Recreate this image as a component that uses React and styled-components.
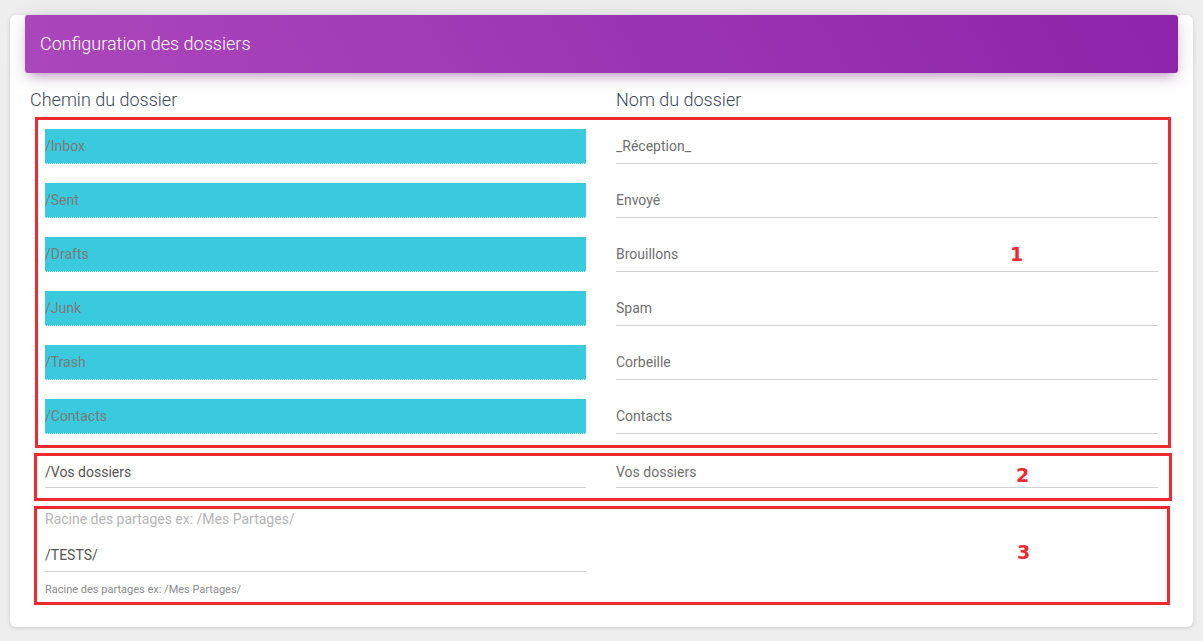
import React from 'react'
import styled, {createGlobalStyle} from 'styled-components'

const GlobalStyle = createGlobalStyle`
  html, body {
    margin: 0;
    padding: 0;
    background: #eeeeee;
    font-family: Roboto, "Liberation Sans", sans-serif;
  }
`

const Page = styled.div`
  padding: 35px 10px 15px 10px;
`
const Card = styled.div`
  width: 1183px;
  background: #fff;
  border-radius: 6px;
  box-shadow: 0 1px 4px 0 rgba(0, 0, 0, 0.14);
  padding-bottom: 22px;
`
const CardHeader = styled.div`
  margin: -20px 15px 0 15px;
  height: 58px;
  padding: 0 15px;
  display: flex;
  align-items: center;
  border-radius: 3px;
  background: linear-gradient(60deg, #ab47bc, #8e24aa);
  box-shadow: 0 4px 20px 0 rgba(0, 0, 0, 0.14), 0 7px 10px -5px rgba(156, 39, 176, 0.4);
`
const Title = styled.h4`
  margin: 0;
  color: #fff;
  font-size: 18px;
  font-weight: 300;
  line-height: 24px;
`
const Labels = styled.div`
  display: grid;
  grid-template-columns: 586px 1fr;
  margin: 15px 0 5px 20px;
`
const ColumnLabel = styled.div`
  color: #3c4858;
  font-size: 18px;
  font-weight: 300;
  line-height: 24px;
`
const Box = styled.div`
  position: relative;
  box-sizing: border-box;
  width: ${p => p.$width}px;
  margin: ${p => p.$top}px 0 0 ${p => p.$left}px;
  padding: ${p => p.$pad};
  border: 3px solid #ee2a30;
`
const Rows = styled.div`
  display: grid;
  grid-template-columns: 541px 542px;
  column-gap: 30px;
  row-gap: 19px;
`
const Field = styled.div`
  box-sizing: border-box;
  height: ${p => p.$h || 35}px;
  display: flex;
  align-items: center;
  font-size: 14px;
  color: ${p => p.$dark ? '#555' : '#6f6f6f'};
  border-bottom: 1px solid #d2d2d2;
`
const LockedField = styled(Field)`
  background: #39cbdd;
  color: #7a7a7a;
  border-bottom: 1px dotted rgba(255, 255, 255, 0.75);
`
const Hint = styled.div`
  font-size: 14px;
  line-height: 20px;
  color: #b5b5b5;
`
const HelpText = styled.div`
  margin-top: 10px;
  font-size: 11px;
  line-height: 16px;
  color: #8c8c8c;
`
const SharesColumn = styled.div`
  width: 541px;
`
const SharesField = styled(Field)`
  margin-top: 10px;
`
const Marker = styled.span`
  position: absolute;
  left: ${p => p.$x}px;
  top: ${p => p.$y}px;
  font-family: "DejaVu Sans", sans-serif;
  font-weight: bold;
  font-size: 19px;
  line-height: 22px;
  color: #ee2a30;
`

const folders = [
  ['/Inbox', '_Réception_'],
  ['/Sent', 'Envoyé'],
  ['/Drafts', 'Brouillons'],
  ['/Junk', 'Spam'],
  ['/Trash', 'Corbeille'],
  ['/Contacts', 'Contacts'],
]

export default function App() {
  return (
    <Page>
      <GlobalStyle />
      <Card>
        <CardHeader>
          <Title>Configuration des dossiers</Title>
        </CardHeader>
        <Labels>
          <ColumnLabel>Chemin du dossier</ColumnLabel>
          <ColumnLabel>Nom du dossier</ColumnLabel>
        </Labels>

        <Box $width={1136} $left={25} $top={0} $pad="9px 10px 11px 7px">
          <Rows>
            {folders.map(([path, name]) => (
              <React.Fragment key={path}>
                <LockedField>{path}</LockedField>
                <Field>{name}</Field>
              </React.Fragment>
            ))}
          </Rows>
          <Marker $x={972} $y={123}>1</Marker>
        </Box>

        <Box $width={1138} $left={24} $top={5} $pad="0 11px 10px 8px">
          <Rows>
            <Field $h={32} $dark>/Vos dossiers</Field>
            <Field $h={32}>Vos dossiers</Field>
          </Rows>
          <Marker $x={979} $y={8}>2</Marker>
        </Box>

        <Box $width={1136} $left={24} $top={5} $pad="0 9px 4px 8px">
          <SharesColumn>
            <Hint>Racine des partages ex: /Mes Partages/</Hint>
            <SharesField $h={33} $dark>/TESTS/</SharesField>
            <HelpText>Racine des partages ex: /Mes Partages/</HelpText>
          </SharesColumn>
          <Marker $x={980} $y={32}>3</Marker>
        </Box>
      </Card>
    </Page>
  )
}
